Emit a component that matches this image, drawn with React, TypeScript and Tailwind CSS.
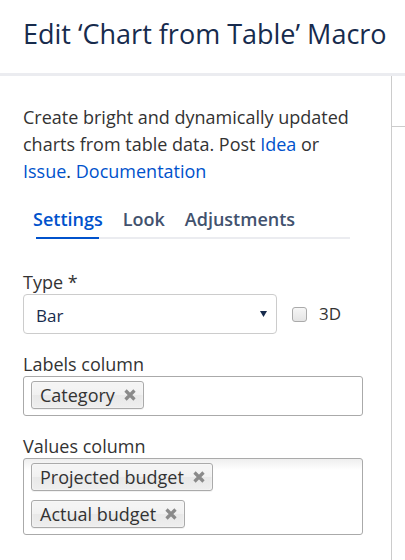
import React from "react";

const font = { fontFamily: '"Open Sans", "Noto Sans", sans-serif' };

function XIcon() {
  return (
    <svg width="12" height="12" viewBox="0 0 12 12" className="shrink-0">
      <path d="M1.5 1.5 L10.5 10.5 M10.5 1.5 L1.5 10.5" stroke="#8a8a8a" strokeWidth="3.2" strokeLinecap="butt" />
    </svg>
  );
}

function Chip({ label }: { label: string }) {
  return (
    <div className="flex h-[28px] items-center gap-[9px] rounded-[3px] border border-[#aaa] bg-[linear-gradient(#f4f4f4_20%,#f0f0f0_50%,#e8e8e8_52%,#eeeeee_100%)] pl-[8px] pr-[7px] text-[18px] leading-[24px] text-[#333] shadow-[inset_0_0_2px_#fff,0_1px_0_rgba(0,0,0,0.05)]">
      <span>{label}</span>
      <XIcon />
    </div>
  );
}

export default function App() {
  return (
    <div className="flex h-[560px] w-[405px] flex-col overflow-hidden bg-white" style={font}>
      <div className="h-[76px] shrink-0 border-b-[3px] border-[#ebecf0] pl-[23px] pt-[16px]">
        <h2 className="whitespace-nowrap text-[27px] leading-[36px] text-[#172b4d]">Edit ‘Chart from Table’ Macro</h2>
      </div>
      <div className="flex flex-1">
        <div className="w-[392px] shrink-0 border-r border-[#ccc] pl-[23px] pt-[28px]">
          <p className="w-[340px] text-[18px] leading-[27px] text-[#333]">
            Create bright and dynamically updated charts from table data. Post{" "}
            <span className="text-[#0052cc]">Idea</span> or{" "}
            <span className="text-[#0052cc]">Issue</span>.{" "}
            <span className="text-[#0052cc]">Documentation</span>
          </p>

          <div className="mt-[22px] ml-[10px]">
            <div className="flex gap-[20px] pb-[6px] text-[18px] font-semibold leading-[24px]">
              <span className="text-[#0052cc]">Settings</span>
              <span className="text-[#42526e]">Look</span>
              <span className="text-[#42526e]">Adjustments</span>
            </div>
            <div className="ml-[3px] flex h-[2px] w-[314px] bg-[#ebecf0]">
              <div className="h-[2px] w-[63px] bg-[#0052cc]" />
            </div>
          </div>

          <div className="mt-[31px] text-[18px] leading-[24px] text-[#333]">Type *</div>
          <div className="flex items-center">
            <div className="flex h-[40px] w-[254px] items-center justify-between rounded-[4px] border border-[#ccc] pl-[12px] pr-[9px] pt-[3px]">
              <span className="text-[17px] leading-[24px] text-[#172b4d]">Bar</span>
              <svg width="7" height="6" viewBox="0 0 7 6" className="-mt-[3px]">
                <path d="M0 0 H7 L3.5 6 Z" fill="#172b4d" />
              </svg>
            </div>
            <div className="ml-[15px] h-[15px] w-[15px] rounded-[3px] border border-[#aaa] bg-[linear-gradient(#f6f6f6,#e4e4e4)]" />
            <span className="ml-[12px] text-[17px] leading-[24px] text-[#333]">3D</span>
          </div>

          <div className="mt-[18px] text-[18px] leading-[24px] text-[#333]">Labels column</div>
          <div className="flex h-[40px] w-[340px] items-start rounded-[3px] border border-[#aaa] bg-white pl-[7px] pt-[4px]">
            <Chip label="Category" />
          </div>

          <div className="mt-[18px] text-[18px] leading-[24px] text-[#333]">Values column</div>
          <div className="flex w-[340px] flex-col items-start gap-[9px] rounded-[3px] border border-[#aaa] bg-[linear-gradient(to_bottom,#eeeeee_0%,#ffffff_15%)] pb-[6px] pl-[7px] pt-[4px]">
            <Chip label="Projected budget" />
            <Chip label="Actual budget" />
          </div>
        </div>
        <div className="flex-1">
          <div className="mt-[50px] border-t border-[#ccc]" />
        </div>
      </div>
    </div>
  );
}
